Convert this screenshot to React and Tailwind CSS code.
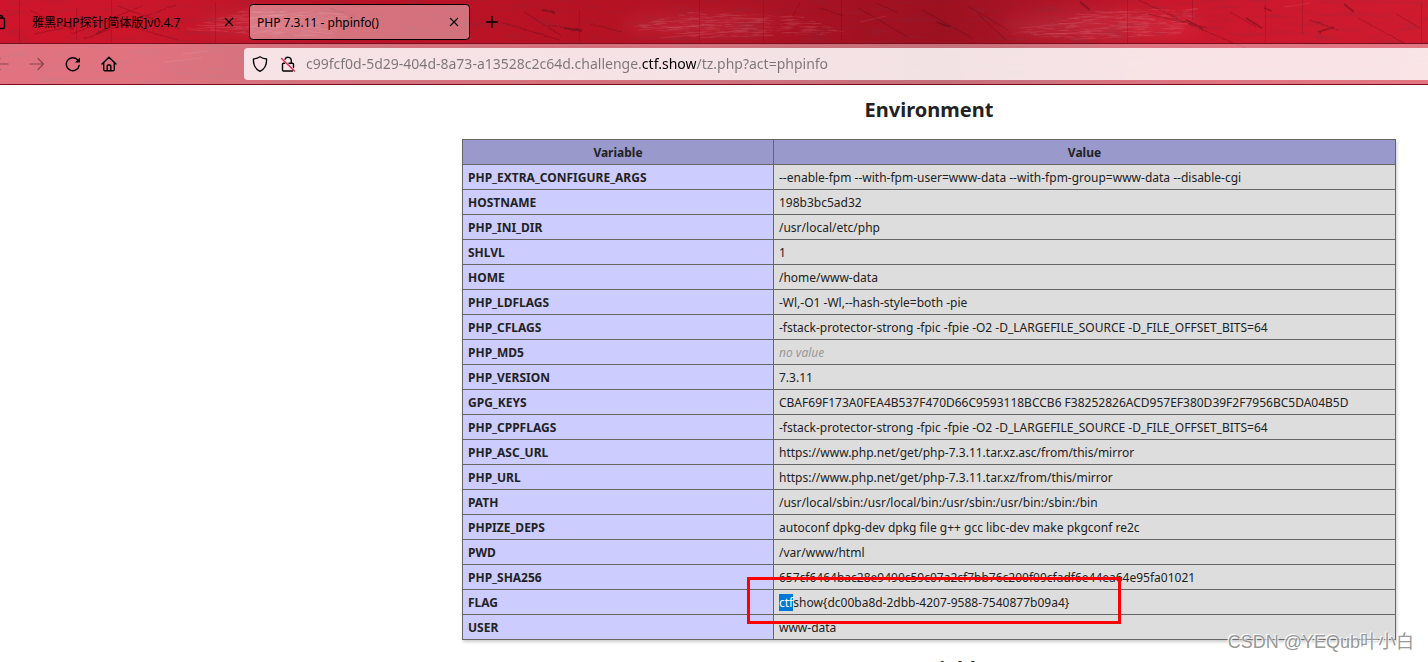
import React from "react";

const rows = [
  ["PHP_EXTRA_CONFIGURE_ARGS", "--enable-fpm --with-fpm-user=www-data --with-fpm-group=www-data --disable-cgi"],
  ["HOSTNAME", "198b3bc5ad32"],
  ["PHP_INI_DIR", "/usr/local/etc/php"],
  ["SHLVL", "1"],
  ["HOME", "/home/www-data"],
  ["PHP_LDFLAGS", "-Wl,-O1 -Wl,--hash-style=both -pie"],
  ["PHP_CFLAGS", "-fstack-protector-strong -fpic -fpie -O2 -D_LARGEFILE_SOURCE -D_FILE_OFFSET_BITS=64"],
  ["PHP_MD5", null],
  ["PHP_VERSION", "7.3.11"],
  ["GPG_KEYS", "CBAF69F173A0FEA4B537F470D66C9593118BCCB6 F38252826ACD957EF380D39F2F7956BC5DA04B5D"],
  ["PHP_CPPFLAGS", "-fstack-protector-strong -fpic -fpie -O2 -D_LARGEFILE_SOURCE -D_FILE_OFFSET_BITS=64"],
  ["PHP_ASC_URL", "https://www.php.net/get/php-7.3.11.tar.xz.asc/from/this/mirror"],
  ["PHP_URL", "https://www.php.net/get/php-7.3.11.tar.xz/from/this/mirror"],
  ["PATH", "/usr/local/sbin:/usr/local/bin:/usr/sbin:/usr/bin:/sbin:/bin"],
  ["PHPIZE_DEPS", "autoconf dpkg-dev dpkg file g++ gcc libc-dev make pkgconf re2c"],
  ["PWD", "/var/www/html"],
  ["PHP_SHA256", "657cf6464bac28e9490c59c07a2cf7bb76c200f09cfadf6e44ea64e95fa01021"],
  ["FLAG", "ctfshow{dc00ba8d-2dbb-4207-9588-7540877b09a4}"],
  ["USER", "www-data"],
];

function ThemeTexture() {
  return (
    <svg className="absolute inset-0 h-full w-full" viewBox="0 0 1428 85" preserveAspectRatio="none" aria-hidden="true">
      <defs>
        <linearGradient id="red" x1="0" x2="1" y1="0" y2="0">
          <stop offset="0" stopColor="#cf152b" />
          <stop offset="0.1" stopColor="#cc162a" />
          <stop offset="0.2" stopColor="#b91528" />
          <stop offset="0.38" stopColor="#b91224" />
          <stop offset="0.5" stopColor="#b01324" />
          <stop offset="0.66" stopColor="#9c1020" />
          <stop offset="0.74" stopColor="#b01527" />
          <stop offset="0.82" stopColor="#cb172c" />
          <stop offset="1" stopColor="#d01b2f" />
        </linearGradient>
        <filter id="grain" x="0" y="0" width="100%" height="100%">
          <feTurbulence type="fractalNoise" baseFrequency="0.03 0.22" numOctaves="4" seed="8" />
          <feColorMatrix values="0 0 0 0 0.2  0 0 0 0 0.03  0 0 0 0 0.06  0 0 0 4 -2.1" />
        </filter>
        <filter id="wear" x="0" y="0" width="100%" height="100%">
          <feTurbulence type="fractalNoise" baseFrequency="0.06 0.6" numOctaves="3" seed="21" />
          <feColorMatrix values="0 0 0 0 0.85  0 0 0 0 0.4  0 0 0 0 0.45  0 0 0 4 -1.8" />
          <feComposite in2="SourceGraphic" operator="in" />
        </filter>
        <filter id="soft" x="-20%" y="-50%" width="140%" height="200%">
          <feGaussianBlur stdDeviation="9" />
        </filter>
        <filter id="rough">
          <feTurbulence type="fractalNoise" baseFrequency="0.2" numOctaves="2" seed="4" />
          <feDisplacementMap in="SourceGraphic" scale="3" />
        </filter>
      </defs>
      <rect width="1428" height="85" fill="url(#red)" />
      <rect width="1428" height="85" filter="url(#grain)" opacity="0.2" />
      <g filter="url(#soft)" fill="#ef7888" opacity="0.17">
        <ellipse cx="270" cy="24" rx="70" ry="10" />
        <ellipse cx="700" cy="25" rx="80" ry="9" />
        <ellipse cx="1100" cy="26" rx="100" ry="12" />
      </g>
      <g filter="url(#wear)" opacity="0.16">
        <path d="M180 30L250 8L350 14L330 38zM632 26L690 12L800 16L850 34L700 38zM1010 34L1100 10L1200 8L1180 34L1080 40z" />
      </g>
      <g stroke="#3d0c14" fill="none" opacity="0.38">
        <path d="M19.500 0V44M76.500 8V40M111.500 0V44M215.500 2V44M579.500 10V44M699.500 0V44M763.500 0V44M841.500 0V40M1127.500 0V44M1192.500 0V20M1265.500 4V44M1302.500 0V34M1421.500 4V44" strokeWidth="0.5" />
        <g filter="url(#rough)" strokeWidth="0.7">
          <path d="M30 10l26 14M72 34l70-28M84 39l92-34M108 20l70 20M118 6l62 23M34 34l30-6M330 8l26 9M500 22l60 18M524 12l38 24M548 25l34 5M590 24l32 8M800 3l-7 13M820 8l24 8M858 8l50 29M876 3l22 10M922 10l50 28M968 6l40 24M978 14l28 26M1138 0l40 18M1148 14l60 14M1170 16l80 34M1230 12l26 15M1310 20l28 10M1358 18l46 25M1396 14l24 14" />
          <path d="M60 24l14 5M96 34l16-8M542 10l12 2M564 28l18 3M936 22l14 5M1080 2l10 8M1186 20l16 8M1246 18l16 10M1264 8l8 3M1318 32l16-5M1344 4l10 8" strokeWidth="1.800" />
        </g>
      </g>
      <g stroke="#f0909b" strokeWidth="0.5" fill="none" opacity="0.3">
        <path d="M164 62l38-4M182 54l26-3M1020 28l64-6M638 30l66-5M860 22l26-6M1284 7l26-4M1076 14l80 6M1034 35l70-4M660 38l88-8M226 30l50-6M248 18l54-5" />
      </g>
    </svg>
  );
}

const stroke = { fill: "none", stroke: "currentColor", strokeLinecap: "round", strokeLinejoin: "round" };

function CloseIcon() {
  return (
    <svg className="h-3 w-3" viewBox="0 0 12 12" {...stroke} strokeLinecap="butt" aria-hidden="true">
      <path d="M2 2l8 8M10 2l-8 8" strokeWidth="1.1" />
    </svg>
  );
}

function Arrow({ left }) {
  return (
    <svg className="h-4 w-4" viewBox="0 0 16 16" {...stroke} strokeWidth="1.2" aria-hidden="true">
      {left ? <path d="M15 8H1.500M7 2.500L1.500 8L7 13.500" /> : <path d="M1 8h13.500M9 2.500L14.500 8L9 13.500" />}
    </svg>
  );
}

function Browser() {
  return (
    <header className="relative shrink-0 overflow-hidden text-black">
      <ThemeTexture />
      <div className="relative flex h-11 items-center border-b border-[#7d0f1c]">
        <div className="flex w-5 shrink-0 items-center self-stretch overflow-hidden">
          <svg className="-ml-2.5 h-4 w-4 shrink-0" viewBox="0 0 16 16" {...stroke} strokeWidth="1.4" aria-hidden="true">
            <path d="M2 4h11a1.500 1.500 0 0 1 1.500 1.500v7.500a1.500 1.500 0 0 1-1.500 1.500H2M4 1.500h6.500a2 2 0 0 1 2 2V4" />
          </svg>
        </div>
        <div className="flex w-[229px] shrink-0 items-center justify-between pl-3 pr-3.5 text-[12px]">
          <span className="whitespace-nowrap pt-0.5 font-['Noto_Sans','Noto_Sans_CJK_SC',sans-serif]">雅黑PHP探针[简体版]v0.4.7</span>
          <button type="button" aria-label="Close tab"><CloseIcon /></button>
        </div>
        <div className="flex h-9 w-[221px] shrink-0 items-center justify-between rounded border border-black bg-white/40 pl-[7px] pr-[9px] text-[12px]">
          <span className="whitespace-nowrap pt-0.5">PHP 7.3.11 - phpinfo()</span>
          <button type="button" aria-label="Close tab"><CloseIcon /></button>
        </div>
        <button type="button" aria-label="New tab" className="ml-3.5">
          <svg className="h-4 w-4" viewBox="0 0 16 16" {...stroke} strokeWidth="1.3" aria-hidden="true">
            <path d="M8 2.500v11M2.500 8h11" />
          </svg>
        </button>
      </div>
      <div className="relative flex h-[41px] items-center border-b border-[#7d0f1c] bg-white/40">
        <nav className="flex w-[244px] shrink-0 items-center gap-5">
          <button type="button" aria-label="Back" className="-ml-[7px] opacity-40"><Arrow left /></button>
          <button type="button" aria-label="Forward" className="opacity-40"><Arrow /></button>
          <button type="button" aria-label="Reload">
            <svg className="h-4 w-4" viewBox="0 0 16 16" {...stroke} strokeWidth="1.4" aria-hidden="true">
              <path d="M14.200 9.500A6.500 6.500 0 1 1 12.600 3.800L13.500 4.700" />
              <path d="M15 1.500V6.500H10z" fill="currentColor" stroke="none" />
            </svg>
          </button>
          <button type="button" aria-label="Home">
            <svg className="h-4 w-4" viewBox="0 0 16 16" {...stroke} strokeWidth="1.4" aria-hidden="true">
              <path d="M1 8L8 1.200L15 8M2.700 6.700V13.500a1.200 1.200 0 0 0 1.200 1.200H12.100a1.200 1.200 0 0 0 1.200-1.200V6.700M6.200 14.500V10a1 1 0 0 1 1-1h1.600a1 1 0 0 1 1 1v4.500" />
            </svg>
          </button>
        </nav>
        <div className="flex h-8 min-w-0 flex-1 items-center rounded-l bg-white/80 pl-2">
          <svg className="h-4 w-4 shrink-0" viewBox="0 0 16 16" {...stroke} strokeWidth="1.3" aria-hidden="true">
            <path d="M8 .8C6.300 2 3.800 2.800 1.400 3C1.200 9 3.600 13.300 8 15.300C12.400 13.300 14.800 9 14.600 3C12.200 2.800 9.700 2 8 .8z" />
          </svg>
          <svg className="ml-3 h-4 w-4 shrink-0" viewBox="0 0 16 16" {...stroke} strokeWidth="1.4" aria-hidden="true">
            <path d="M5 3.200a3.300 3.300 0 0 1 6.300 1.300V7M9 7.200H12.500a1 1 0 0 1 1 1V11.500M2.500 8.200V14a1 1 0 0 0 1 1H12.500M2.500 8.200a1 1 0 0 1 1-1H4.500" />
            <path d="M1.500 2.500L14.500 15" stroke="#e22850" />
          </svg>
          <input
            aria-label="Address"
            defaultValue="c99fcf0d-5d29-404d-8a73-a13528c2c64d.challenge.ctf.show/tz.php?act=phpinfo"
            className="ml-2.5 min-w-0 flex-1 bg-[linear-gradient(90deg,#7c7577_336px,#000_336px,#000_390px,#7c7577_390px)] bg-clip-text text-[14px] leading-6 text-transparent outline-none"
          />
        </div>
      </div>
    </header>
  );
}

function Value({ name, value }) {
  if (value === null) return <i className="text-[#999]">no value</i>;
  if (name !== "FLAG") return value;
  return (
    <>
      <mark className="bg-[#0078d7] text-white">{value.slice(0, 3)}</mark>
      {value.slice(3)}
      <span className="pointer-events-none absolute -left-[27px] -top-[13px] z-10 h-[47px] w-[374px] border-3 border-[#f00]" />
    </>
  );
}

export default function App() {
  return (
    <div className="relative flex h-screen flex-col overflow-hidden bg-white font-['Noto_Sans','Open_Sans',sans-serif] text-[#222]">
      <Browser />
      <main className="min-h-0 flex-1 overflow-hidden pr-8">
        <section className="ml-auto w-full max-w-[934px]">
          <h2 className="pb-[15px] pt-[11px] text-center text-[20px] font-bold leading-7">Environment</h2>
          <table className="w-full table-fixed border-collapse text-[12px] leading-4 shadow-[1px_2px_3px_#ccc]">
            <thead>
              <tr className="bg-[#9999cc]">
                <th className="w-1/3 border border-[#666] px-[5px] pb-[3px] pt-[5px]">Variable</th>
                <th className="border border-[#666] px-[5px] pb-[3px] pt-[5px]">Value</th>
              </tr>
            </thead>
            <tbody>
              {rows.map(([name, value]) => (
                <tr key={name}>
                  <th scope="row" className="border border-[#666] bg-[#ccccff] px-[5px] pb-[3px] pt-[5px] text-left font-bold">{name}</th>
                  <td className="relative whitespace-nowrap border border-[#666] bg-[#ddd] bg-clip-padding px-[5px] pb-[3px] pt-[5px]">
                    <Value name={name} value={value} />
                  </td>
                </tr>
              ))}
            </tbody>
          </table>
          <h2 className="pt-[15px] text-center text-[20px] font-bold leading-7">PHP Variables</h2>
        </section>
      </main>
      <div className="pointer-events-none absolute bottom-1.5 right-3.5 z-20 whitespace-nowrap font-['Liberation_Sans','Noto_Sans_CJK_SC',sans-serif] text-[18px] leading-7 text-[#999] [text-shadow:1px_1px_1px_#fff,-1px_-1px_1px_#fff]">
        CSDN @YEQub叶小白
      </div>
    </div>
  );
}
